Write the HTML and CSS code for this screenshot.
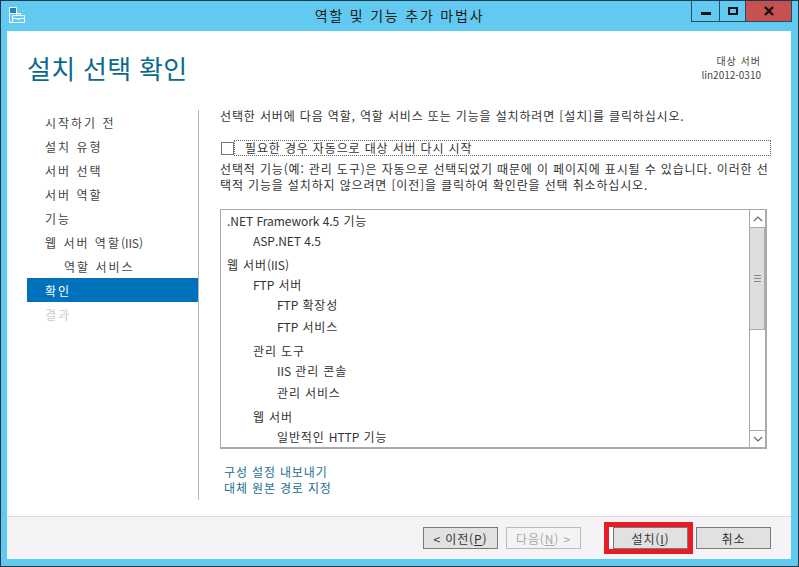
FILE: index.html
```html
<!DOCTYPE html>
<html lang="ko">
<head>
    <meta charset="UTF-8">
    <title>역할 및 기능 추가 마법사</title>
    <link rel="stylesheet" href="styles.css">
</head>
<body>

<div class="window">
    <div class="titlebar">
        <svg class="app-icon" width="17" height="17" viewBox="0 0 17 17">
            <path d="M0.5 0.5h7v6h-7z" fill="#1f86c9" stroke="#fff"/>
            <path d="M0.5 6.5v9h3M7.5 6.5v1" fill="none" stroke="#fff"/>
            <path d="M3.5 8.5h12v7h-12z" fill="#62c9f0" stroke="#fff"/>
            <path d="M7.5 8.5v-2h4v2M3.5 11.5h12" fill="none" stroke="#fff"/>
            <path d="M8.5 11h2v2h-2z" fill="#fff"/>
        </svg>
        <div class="title">역할 및 기능 추가 마법사</div>
        <div class="controls">
            <div class="ctl ctl-min"><span class="min-glyph"></span></div>
            <div class="ctl ctl-max"><span class="max-glyph"></span></div>
            <div class="ctl ctl-close">
                <svg width="12" height="10" viewBox="0 0 12 10"><path d="M2 1l8 8M10 1l-8 8" stroke="#111" stroke-width="2.4" fill="none"/></svg>
            </div>
        </div>
    </div>

    <div class="client">
        <div class="header">
            <h1>설치 선택 확인</h1>
            <div class="target">
                <div class="target-label">대상 서버</div>
                <div>lin2012-0310</div>
            </div>
        </div>

        <div class="body">
            <ul class="steps">
                <li>시작하기 전</li>
                <li>설치 유형</li>
                <li>서버 선택</li>
                <li>서버 역할</li>
                <li>기능</li>
                <li>웹 서버 역할<span class="lat">(IIS)</span></li>
                <li class="sub">역할 서비스</li>
                <li class="active">확인</li>
                <li class="disabled">결과</li>
            </ul>

            <div class="main">
                <p class="intro">선택한 서버에 다음 역할, 역할 서비스 또는 기능을 설치하려면 [설치]를 클릭하십시오.</p>

                <div class="check-row">
                    <span class="checkbox"></span>
                    <span class="check-label">필요한 경우 자동으로 대상 서버 다시 시작</span>
                </div>

                <p class="note">선택적 기능(예: 관리 도구)은 자동으로 선택되었기 때문에 이 페이지에 표시될 수 있습니다. 이러한 선<br>택적 기능을 설치하지 않으려면 [이전]을 클릭하여 확인란을 선택 취소하십시오.</p>

                <div class="listbox">
                    <div class="items">
                        <div class="item"><span class="lat">.NET Framework 4.5</span> 기능</div>
                        <div class="item lv1"><span class="lat">ASP.NET 4.5</span></div>
                        <div class="item group">웹 서버<span class="lat">(IIS)</span></div>
                        <div class="item lv1"><span class="lat">FTP</span> 서버</div>
                        <div class="item lv2"><span class="lat">FTP</span> 확장성</div>
                        <div class="item lv2 gap"><span class="lat">FTP</span> 서비스</div>
                        <div class="item lv1 group">관리 도구</div>
                        <div class="item lv2"><span class="lat">IIS</span> 관리 콘솔</div>
                        <div class="item lv2 gap">관리 서비스</div>
                        <div class="item lv1 group">웹 서버</div>
                        <div class="item lv2">일반적인 <span class="lat">HTTP</span> 기능</div>
                    </div>
                    <div class="scrollbar">
                        <div class="arrow">
                            <svg width="10" height="6" viewBox="0 0 10 6"><path d="M1 5l4-4 4 4" fill="none" stroke="#666" stroke-width="1.2"/></svg>
                        </div>
                        <div class="thumb"><span class="grip"></span></div>
                        <div class="track"></div>
                        <div class="arrow arrow-down">
                            <svg width="10" height="6" viewBox="0 0 10 6"><path d="M1 1l4 4 4-4" fill="none" stroke="#666" stroke-width="1.2"/></svg>
                        </div>
                    </div>
                </div>

                <div class="links">
                    <a>구성 설정 내보내기</a>
                    <a>대체 원본 경로 지정</a>
                </div>
            </div>
        </div>

        <div class="footer">
            <button class="btn">&lt; 이전(<u>P</u>)</button>
            <button class="btn btn-off">다음(<u>N</u>) &gt;</button>
            <div class="install-wrap">
                <button class="btn btn-install">설치(<u>I</u>)</button>
                <div class="mark"></div>
            </div>
            <button class="btn">취소</button>
        </div>
    </div>
</div>

</body>
</html>
```

FILE: styles.css
```css
* {
    margin: 0;
    padding: 0;
    box-sizing: border-box;
}

html, body {
    width: 799px;
    height: 567px;
    overflow: hidden;
}

body {
    font-family: "Noto Sans CJK KR", "Noto Sans", sans-serif;
    font-size: 12px;
    letter-spacing: 0.85px;
    color: #333;
}

.lat {
    letter-spacing: -0.05px;
}

.window {
    width: 799px;
    height: 567px;
    background-color: #62c9f0;
    border: 1px solid #1b3a4b;
    display: flex;
    flex-direction: column;
}

.titlebar {
    height: 30px;
    flex-shrink: 0;
    display: flex;
    position: relative;
    justify-content: center;
}

.app-icon {
    position: absolute;
    left: 8px;
    top: 6px;
}

.title {
    font-size: 14px;
    letter-spacing: 1.8px;
    color: #1c1c1c;
    line-height: 29px;
}

.controls {
    position: absolute;
    right: 6px;
    top: 0;
    height: 21px;
    display: flex;
    border: 1px solid #2c4a5c;
    border-top: none;
}

.ctl {
    height: 20px;
    display: flex;
    align-items: center;
    justify-content: center;
}

.ctl-min {
    width: 28px;
    border-right: 1px solid #2c4a5c;
}

.ctl-max {
    width: 26px;
    border-right: 1px solid #2c4a5c;
}

.ctl-close {
    width: 45px;
    background-color: #c75050;
}

.min-glyph {
    width: 10px;
    height: 3px;
    background-color: #111;
    margin-top: 5px;
}

.max-glyph {
    width: 10px;
    height: 8px;
    border: 2px solid #111;
}

.client {
    flex: 1;
    margin: 0 7px 7px 6px;
    background-color: #fff;
    display: flex;
    flex-direction: column;
}

.header {
    height: 79px;
    flex-shrink: 0;
    display: flex;
    justify-content: space-between;
    padding: 0 30px 0 20px;
}

h1 {
    font-size: 26px;
    font-weight: 400;
    letter-spacing: 0.3px;
    color: #0b6a8b;
    line-height: 36px;
    margin-top: 19px;
}

.target {
    text-align: right;
    font-size: 10px;
    letter-spacing: 0;
    line-height: 14px;
    color: #444;
    margin-top: 23px;
}

.target-label {
    letter-spacing: 1px;
}

.body {
    flex: 1;
    display: flex;
    padding-left: 20px;
}

.steps {
    list-style: none;
    width: 172px;
    flex-shrink: 0;
    height: 390px;
    border-right: 1px solid #b8b8b8;
    letter-spacing: 2px;
}

.steps li {
    height: 24px;
    line-height: 26px;
    padding-left: 18px;
    width: 171px;
    color: #444;
}

.steps .sub {
    padding-left: 37px;
}

.steps .active {
    background-color: #0072bc;
    color: #fff;
}

.steps .disabled {
    color: #ccc;
}

.main {
    width: 551px;
    margin-left: 21px;
}

.intro {
    line-height: 16px;
    margin-top: -2px;
    white-space: nowrap;
}

.check-row {
    display: flex;
    align-items: center;
    margin-top: 16px;
    height: 16px;
}

.checkbox {
    width: 13px;
    height: 13px;
    margin-left: 1px;
    border: 1px solid #777;
    flex-shrink: 0;
}

.check-label {
    flex: 1;
    height: 16px;
    line-height: 14px;
    border: 1px dotted #666;
    padding-left: 10px;
    color: #333;
}

.note {
    margin-top: 5px;
    line-height: 16px;
    white-space: nowrap;
}

.listbox {
    width: 547px;
    height: 240px;
    margin-top: 16px;
    border: 1px solid #aaa;
    border-bottom-width: 2px;
    border-right-width: 2px;
    display: flex;
}

.items {
    flex: 1;
    padding-top: 1px;
    overflow: hidden;
}

.item {
    height: 20px;
    line-height: 20px;
    padding-left: 6px;
    white-space: nowrap;
}

.item.lv1 {
    padding-left: 32px;
}

.item.lv2 {
    padding-left: 56px;
}

.item.group {
    margin-top: 4px;
}

.item.gap {
    margin-top: 2px;
}

.scrollbar {
    width: 16px;
    flex-shrink: 0;
    display: flex;
    flex-direction: column;
    border-left: 1px solid #aaa;
}

.arrow {
    height: 17px;
    display: flex;
    align-items: center;
    justify-content: center;
    flex-shrink: 0;
}

.arrow-down {
    border-top: 1px solid #aaa;
}

.thumb {
    height: 103px;
    background-color: #dedede;
    border: 1px solid #aaa;
    border-left: none;
    display: flex;
    align-items: center;
    justify-content: center;
}

.grip {
    width: 7px;
    height: 7px;
    border-top: 1px solid #888;
    border-bottom: 1px solid #888;
    background: linear-gradient(#dedede 2px, #888 2px, #888 3px, #dedede 3px);
}

.track {
    flex: 1;
}

.links {
    margin-top: 15px;
    margin-left: 4px;
    line-height: 16px;
    display: flex;
    flex-direction: column;
}

.links a {
    color: #1a6f8f;
}

.footer {
    height: 43px;
    flex-shrink: 0;
    background-color: #f5f3f6;
    border-top: 1px solid #dcdcdc;
    display: flex;
    align-items: flex-start;
    padding: 10px 20px 0 416px;
    gap: 8px;
}

.btn {
    width: 75px;
    height: 22px;
    font-family: inherit;
    font-size: 12px;
    letter-spacing: inherit;
    color: #333;
    background-color: #e1e1e1;
    border: 1px solid #7a7a7a;
}

.btn-off {
    background-color: #f5f3f6;
    border-color: #bbb;
    color: #a8a8a8;
}

.install-wrap {
    position: relative;
    margin-left: 24px;
}

.btn-install {
    display: block;
}

/* white sliver left between the annotation and the button */
.install-wrap::before {
    content: "";
    position: absolute;
    left: -4px;
    top: 0;
    width: 4px;
    height: 22px;
    background-color: #fff;
}

.mark {
    position: absolute;
    left: -9px;
    top: -5px;
    width: 89px;
    height: 32px;
    border: 5px solid #e81c24;
}
```
